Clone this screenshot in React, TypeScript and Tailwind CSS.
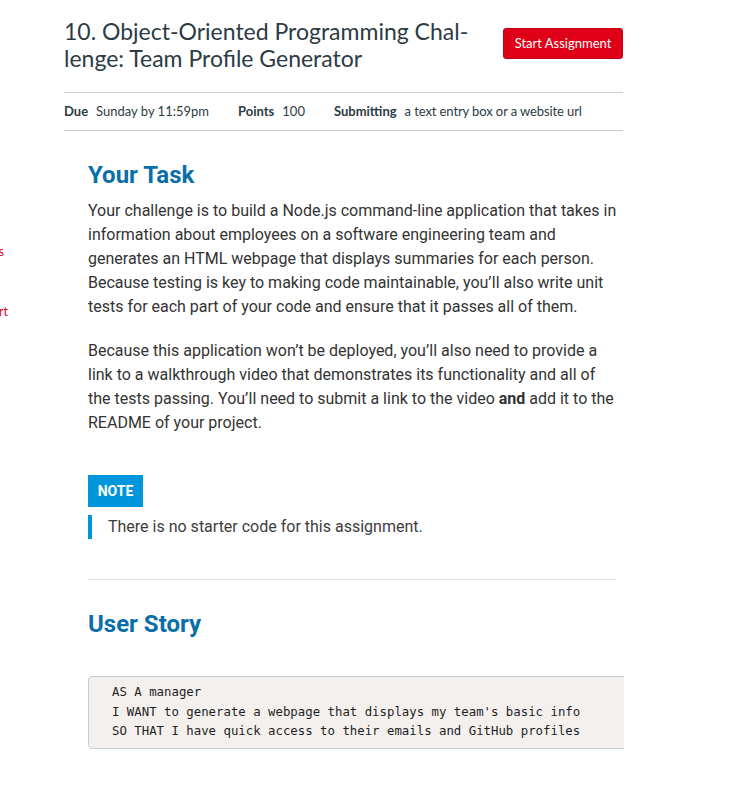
import React from "react";

const lato = { fontFamily: "Lato, 'Liberation Sans', sans-serif" };

function Details() {
  return (
    <div className="flex h-[39px] items-center border-y border-[#c7cdd1] text-[13px] text-[#2d3b45]">
      <span className="font-bold">Due</span>
      <span className="ml-[8px]">Sunday by 11:59pm</span>
      <span className="ml-[29px] font-bold">Points</span>
      <span className="ml-[8px]">100</span>
      <span className="ml-[29px] font-bold">Submitting</span>
      <span className="ml-[8px] tracking-[-0.1px]">a text entry box or a website url</span>
    </div>
  );
}

export default function App() {
  return (
    <div className="relative min-h-[787px] w-full overflow-hidden bg-white">
      <span className="absolute left-[4px] top-[243px] -translate-x-full whitespace-nowrap text-[12.5px] text-[#e0061f]" style={lato}>
        Modules
      </span>
      <span className="absolute left-[8px] top-[303px] -translate-x-full whitespace-nowrap text-[12.5px] text-[#e0061f]" style={lato}>
        Support
      </span>

      <div className="ml-[64px] w-[559px] pt-[18px]" style={lato}>
        <div className="flex items-start justify-between">
          <h1 className="text-[23px] leading-[27px] font-normal text-[#2d3b45]">
            10. Object-Oriented Programming Chal-
            <br />
            lenge: Team Profile Generator
          </h1>
          <button className="mt-[10px] h-[31px] w-[120px] rounded-[3px] border border-[#c0001a] bg-[#df0017] text-[13px] text-white">
            Start Assignment
          </button>
        </div>
        <div className="mt-[20px]">
          <Details />
        </div>
      </div>

      <div
        className="ml-[88px] w-[536px] pt-[30px] text-[#333333]"
        style={{ fontFamily: "Roboto, 'Liberation Sans', sans-serif" }}
      >
        <div className="w-[532px]">
          <h2 className="text-[24px] leading-[28px] font-bold text-[#0a6ea8]">Your Task</h2>
          <p className="mt-[10px] text-[16px] leading-[24px]">
            Your challenge is to build a Node.js command-line application that takes in information about employees on a
            software engineering team and generates an HTML webpage that displays summaries for each person. Because
            testing is key to making code maintainable, you’ll also write unit tests for each part of your code and
            ensure that it passes all of them.
          </p>
          <p className="mt-[20px] text-[16px] leading-[24px]">
            Because this application won’t be deployed, you’ll also need to provide a link to a walkthrough video that
            demonstrates its functionality and all of the tests passing. You’ll need to submit a link to the video{" "}
            <strong className="font-bold">and</strong> add it to the README of your project.
          </p>

          <div className="mt-[40px] inline-flex h-[32px] w-[55px] items-center justify-center bg-[#0096dc] text-[14px] font-bold text-white">
            NOTE
          </div>
          <blockquote className="mt-[8px] border-l-4 border-[#0096dc] pl-[16px] text-[16px] leading-[24px] text-[#3d3d3d]">
            There is no starter code for this assignment.
          </blockquote>

          <hr className="mt-[40px] w-[528px] border-t border-[#e6e6e6]" />

          <h2 className="mt-[30px] text-[24px] leading-[28px] font-bold text-[#0a6ea8]">User Story</h2>
        </div>

        <div className="mt-[38px] overflow-hidden pb-[40px]">
          <pre
            className="w-[560px] rounded-[4px] border border-[#c7cdd1] bg-[#f3f0ee] px-[23px] py-[6px] text-[12.35px] leading-[19.5px] text-[#1f1f1f]"
            style={{ fontFamily: "'DejaVu Sans Mono', 'Liberation Mono', monospace" }}
          >
            {"AS A manager\nI WANT to generate a webpage that displays my team's basic info\nSO THAT I have quick access to their emails and GitHub profiles"}
          </pre>
        </div>
      </div>
    </div>
  );
}
